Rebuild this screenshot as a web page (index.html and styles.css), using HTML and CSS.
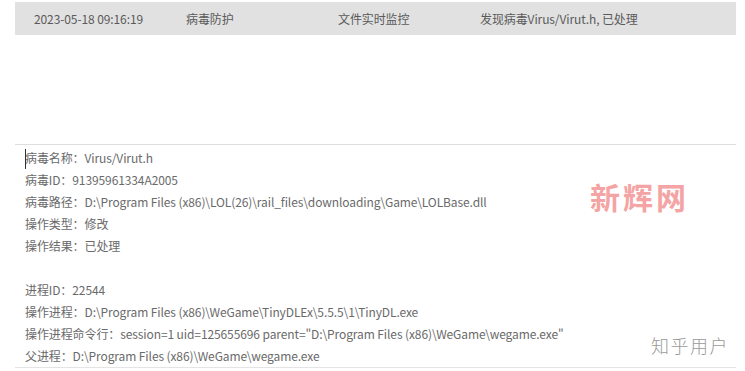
FILE: index.html
```html
<!DOCTYPE html>
<html lang="zh">
<head>
<meta charset="utf-8">
<link rel="stylesheet" href="styles.css">
</head>
<body>
<div class="page">
  <div class="log-row">
    <span class="c-time">2023-05-18 09:16:19</span>
    <span class="c-type">病毒防护</span>
    <span class="c-src">文件实时监控</span>
    <span class="c-msg">发现病毒Virus/Virut.h, 已处理</span>
  </div>
  <div class="detail">
    <div class="line"><span class="caret"></span>病毒名称：Virus/Virut.h</div>
    <div class="line">病毒ID：91395961334A2005</div>
    <div class="line">病毒路径：D:\Program Files (x86)\LOL(26)\rail_files\downloading\Game\LOLBase.dll</div>
    <div class="line">操作类型：修改</div>
    <div class="line">操作结果：已处理</div>
    <div class="line"></div>
    <div class="line">进程ID：22544</div>
    <div class="line">操作进程：D:\Program Files (x86)\WeGame\TinyDLEx\5.5.5\1\TinyDL.exe</div>
    <div class="line">操作进程命令行：session=1 uid=125655696 parent="D:\Program Files (x86)\WeGame\wegame.exe"</div>
    <div class="line">父进程：D:\Program Files (x86)\WeGame\wegame.exe</div>
    <div class="wm-red">新辉网</div>
    <div class="wm-gray">知乎用户</div>
  </div>
</div>
</body>
</html>
```

FILE: styles.css
```css
html, body {
  margin: 0;
  padding: 0;
  background: #ffffff;
}
body {
  font-family: "Noto Sans CJK SC", "Noto Sans", sans-serif;
  font-size: 12px;
  color: #666;
}
.page {
  width: 745px;
  height: 371px;
  overflow: hidden;
  padding-top: 2px;
  box-sizing: border-box;
}
.log-row {
  margin-left: 15px;
  width: 721px;
  height: 33px;
  background: #e1e1e1;
  display: flex;
  align-items: center;
  color: #5a5a5a;
  font-size: 12px;
  letter-spacing: -0.1px;
}
.c-time { margin-left: 19px; width: 152px; }
.c-type { width: 152px; }
.c-src { width: 142px; }
.detail {
  position: relative;
  margin-top: 109px;
  margin-left: 15px;
  width: 721px;
  border-top: 1px solid #dedede;
  border-bottom: 1px solid #e4e4e4;
  padding: 2px 0 0 10px;
  box-sizing: border-box;
}
.line {
  height: 22px;
  line-height: 22px;
  white-space: nowrap;
  color: #6a6a6a;
  position: relative;
  letter-spacing: -0.1px;
}
.caret {
  position: absolute;
  left: 0;
  top: 2px;
  width: 1px;
  height: 20px;
  background: #333;
}
.wm-red {
  position: absolute;
  left: 575px;
  top: 29px;
  font-size: 30px;
  font-weight: 700;
  color: #f4a4a4;
  letter-spacing: 3px;
}
.wm-gray {
  position: absolute;
  left: 636px;
  top: 187px;
  font-size: 18px;
  font-weight: 300;
  color: #9a9a9a;
  letter-spacing: 1.5px;
}
```
